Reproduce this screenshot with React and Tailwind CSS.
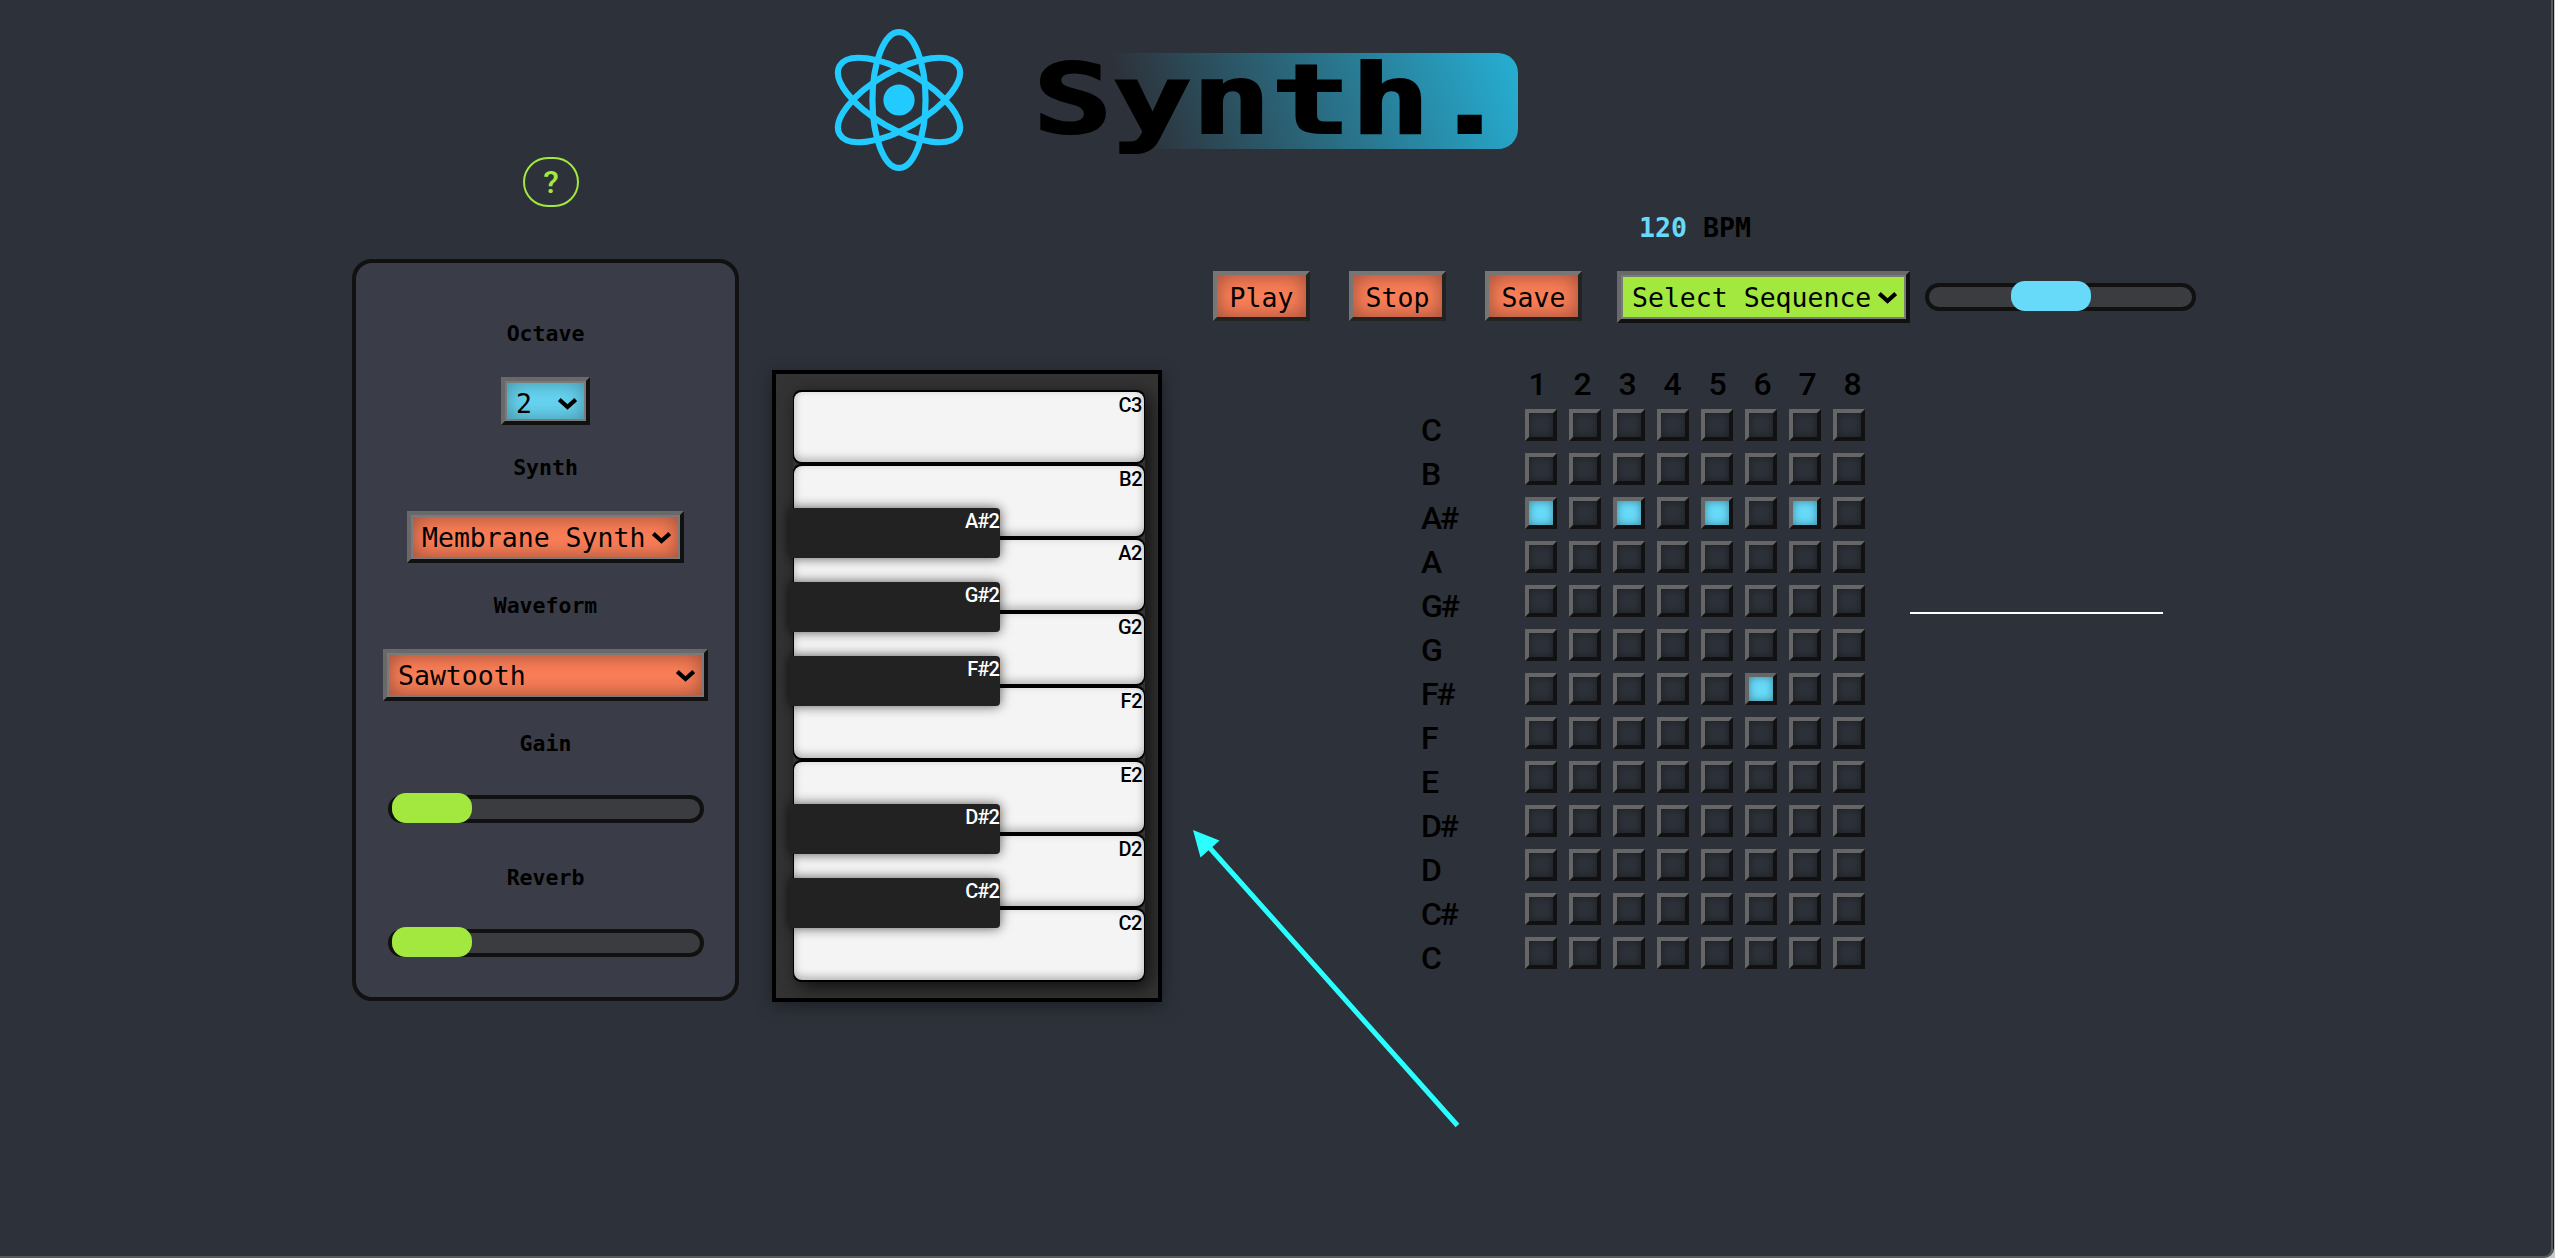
import React from "react";

const MONO = "font-['DejaVu_Sans_Mono','Liberation_Mono',monospace]";
const NOTE = "font-['Roboto','Liberation_Sans',sans-serif]";

const whiteKeys = [
  { note: "C3" },
  { note: "B2" },
  { note: "A2", sharp: "A#2" },
  { note: "G2", sharp: "G#2" },
  { note: "F2", sharp: "F#2" },
  { note: "E2" },
  { note: "D2", sharp: "D#2" },
  { note: "C2", sharp: "C#2" },
];

const rows = ["C", "B", "A#", "A", "G#", "G", "F#", "F", "E", "D#", "D", "C#", "C"];
const active = { 2: [0, 2, 4, 6], 6: [5] };
const steps = [0, 1, 2, 3, 4, 5, 6, 7];

function Logo() {
  return (
    <svg className="h-[142px] w-[132px]" viewBox="-10.69 -11.5 21.38 23" fill="none" stroke="#22cbff">
      <circle r="2.53" fill="#22cbff" stroke="none" />
      <ellipse rx="4.3" ry="11" />
      <ellipse rx="4.6" ry="11.1" transform="rotate(60)" />
      <ellipse rx="4.6" ry="11.1" transform="rotate(-60)" />
    </svg>
  );
}

function Chevron() {
  return (
    <svg className="mt-[10px] h-[12px] w-[19px] shrink-0" viewBox="0 0 19 12" fill="none" stroke="#000" strokeWidth="4.2">
      <path d="M1.3 1.6 9.5 9 17.7 1.6" />
    </svg>
  );
}

function Select({ className, face, children }) {
  return (
    <button className={"flex border-4 border-t-[#696969] border-r-[#111] border-b-[#111] border-l-[#696969] " + className}>
      <span className={"flex h-full w-full justify-between border-2 border-[#7a7a7a] pt-[5px] pr-[7px] pl-[9px] " + face}>
        <span className="text-[26.5px] leading-8 whitespace-nowrap">{children}</span>
        <Chevron />
      </span>
    </button>
  );
}

function PushButton({ children }) {
  return (
    <button className="flex h-[50px] w-[97px] justify-center border-4 border-t-[#767676] border-r-[#222] border-b-[#222] border-l-[#767676] bg-[#fb7e57] pt-[7px] text-[26.5px] leading-8 shadow-[inset_0_0_20px_rgba(0,0,0,0.4)]">
      {children}
    </button>
  );
}

function Slider({ className, thumb }) {
  return (
    <div className={"relative h-7 rounded-[14px] border-4 border-[#111] bg-[#3a3c3f] " + className}>
      <div className={"absolute -top-[6px] h-[30px] w-[80px] rounded-[14px] " + thumb} />
    </div>
  );
}

function Label({ children }) {
  return <div className="h-6 text-[21.5px] leading-6 font-bold">{children}</div>;
}

function Controls() {
  return (
    <div className="mt-[52px] flex h-[742px] w-[387px] flex-col items-center rounded-[20px] border-4 border-[#111] bg-[#3a3d47] pt-[59px]">
      <Label>Octave</Label>
      <Select className="mt-[31px] h-12 w-[89px]" face="bg-[#67d6f3] shadow-[inset_0_0_20px_rgba(0,0,0,0.35)]">2</Select>
      <div className="h-[31px]" />
      <Label>Synth</Label>
      <Select className="mt-[31px] h-[52px] w-[277px]" face="bg-[#fb7e57] shadow-[inset_0_0_20px_rgba(0,0,0,0.4)]">Membrane Synth</Select>
      <div className="h-[31px]" />
      <Label>Waveform</Label>
      <Select className="mt-[31px] h-[52px] w-[325px]" face="bg-[#fb7e57] shadow-[inset_0_0_20px_rgba(0,0,0,0.4)]">Sawtooth</Select>
      <div className="h-[31px]" />
      <Label>Gain</Label>
      <Slider className="mt-[39px] w-[316px]" thumb="left-0 bg-[#a2e83f]" />
      <div className="h-[43px]" />
      <Label>Reverb</Label>
      <Slider className="mt-[39px] w-[316px]" thumb="left-0 bg-[#a2e83f]" />
    </div>
  );
}

function Piano() {
  return (
    <div className={"mt-[213px] ml-[33px] h-[632px] w-[390px] border-4 border-black bg-[#333] py-4 pr-[13px] pl-[17px] shadow-[0_4px_16px_rgba(0,0,0,0.35)] " + NOTE}>
      <div className="rounded-lg shadow-[5px_5px_18px_rgba(0,0,0,0.7)]">
        {whiteKeys.map(({ note, sharp }) => (
          <div key={note} className="relative h-[74px] rounded-lg bg-black px-px py-[2px]">
            <div className="h-[70px] rounded-[8px] bg-[#f4f4f4] pt-px pr-[2px] text-right text-[20px] leading-6 font-medium tracking-[-0.5px] shadow-[inset_0_-3px_8px_rgba(0,0,0,0.28)]">
              {note}
            </div>
            {sharp && (
              <div className="absolute -top-[30px] -left-[4px] z-10 h-[50px] w-[211px] rounded-[4px] bg-[#222] pt-px pr-[1px] text-right text-[20px] leading-6 font-medium tracking-[-0.9px] text-white shadow-[0_0_12px_rgba(0,0,0,0.65)]">
                {sharp}
              </div>
            )}
          </div>
        ))}
      </div>
    </div>
  );
}

function Step({ on }) {
  return (
    <button
      className={
        "h-8 w-8 border-4 border-t-[#666] border-r-[#111] border-b-[#111] border-l-[#666] shadow-[inset_0_0_9px_rgba(0,0,0,0.4)] " +
        (on ? "bg-[#67dafa]" : "bg-[#2d3139]")
      }
    />
  );
}

function Sequencer() {
  return (
    <div className="mt-[55px] ml-[51px]">
      <div className="ml-[426px] h-8 text-[26.6px] leading-8 font-bold">
        <span className="text-[#67dafa]">120</span> BPM
      </div>
      <div className="mt-[27px] flex h-[52px] items-start">
        <div className="flex gap-[39px]">
          <PushButton>Play</PushButton>
          <PushButton>Stop</PushButton>
          <PushButton>Save</PushButton>
        </div>
        <Select className="ml-[35px] h-[52px] w-[293px]" face="bg-[#a2e83f]">Select Sequence</Select>
        <Slider className="mt-3 ml-[15px] w-[271px]" thumb="left-[82px] bg-[#67dafa]" />
      </div>
      <div className={"mt-[43px] ml-[208px] flex items-start text-[32px] leading-9 font-medium " + NOTE}>
        <div>
          <div className="ml-[94px] flex h-[43px] w-[360px]">
            {steps.map((s) => (
              <span key={s} className="w-[45px] text-center">{s + 1}</span>
            ))}
          </div>
          {rows.map((name, r) => (
            <div key={r} className="flex h-11 w-[444px] items-start">
              <span className="mt-[3px] w-[105px] tracking-[-2.4px]">{name}</span>
              <div className="flex gap-3">
                {steps.map((s) => (
                  <Step key={s} on={(active[r] || []).includes(s)} />
                ))}
              </div>
            </div>
          ))}
        </div>
        <div className="mt-[246px] ml-[35px] h-[2px] w-[253px] bg-white" />
      </div>
    </div>
  );
}

export default function App() {
  return (
    <div className="h-[1258px] w-full overflow-hidden bg-[#c9c7c6] pr-px">
      <div className={"relative h-full rounded-br-[10px] border-r border-[#15161a] " + MONO}>
        <div className="h-full overflow-hidden rounded-br-[9px] border-r-2 border-b-2 border-[#56585e] bg-[#2d3139] text-black">
          <header className="flex h-[157px] items-start pl-[833px]">
            <div className="mt-[29px]">
              <Logo />
            </div>
            <h1 className="mt-[53px] ml-[73px] h-24 w-[480px] rounded-r-[20px] bg-[linear-gradient(70deg,#2d3139_20%,#26afd4_100%)] text-[97px] leading-[94px] font-bold">
              <span className="-ml-[5px] inline-block origin-left scale-x-[1.36] [-webkit-text-stroke:2px_black]">Synth.</span>
            </h1>
          </header>
          <main className="flex items-start pl-[352px]">
            <div>
              <button className={"ml-[171px] flex h-[50px] w-[56px] items-center justify-center rounded-[25px] border-2 border-[#a2e83f] text-[32px] leading-9 font-medium text-[#a2e83f] " + NOTE}>
                ?
              </button>
              <Controls />
            </div>
            <Piano />
            <Sequencer />
          </main>
        </div>
        <svg className="pointer-events-none absolute top-[828px] left-[1190px] h-[302px] w-[272px]" viewBox="1190 828 272 302">
          <path d="M1209 847 1457.5 1125.500" stroke="#2afeff" strokeWidth="5" />
          <path d="M1193 830 1219.500 840.500 1200.500 857.500Z" fill="#2afeff" />
        </svg>
      </div>
    </div>
  );
}
